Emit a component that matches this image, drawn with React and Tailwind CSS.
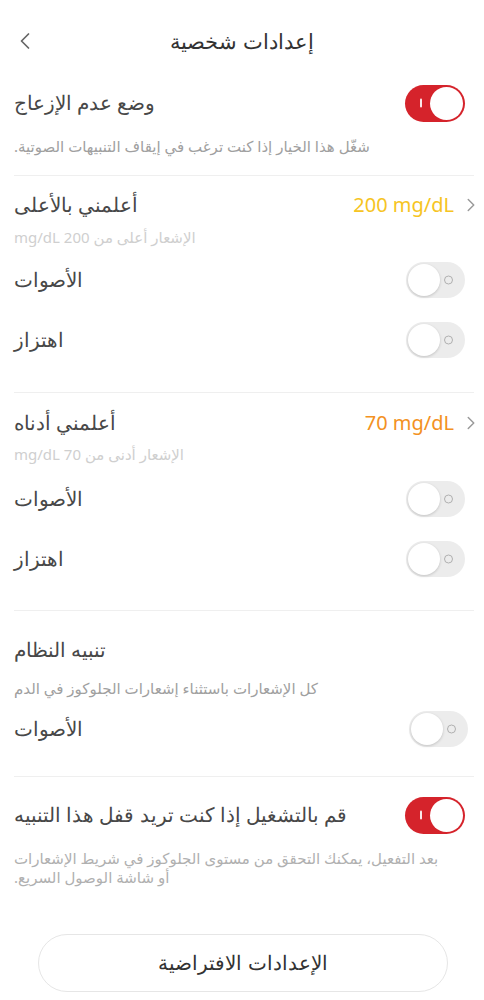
import { ChevronLeft, ChevronRight } from 'lucide-react'

const font = { fontFamily: '"Noto Sans", "DejaVu Sans", sans-serif' }

// ── Toggle ────────────────────────────────────────────────────────────────
function Toggle({ on, className = 'mr-[9px]' }) {
  if (on) {
    return (
      <div className={`relative w-[60px] h-[37px] rounded-full bg-[#d5232b] flex items-center justify-end pr-[2px] ${className}`}>
        <span className="absolute left-[15px] top-1/2 -translate-y-1/2 w-[2px] h-[9px] bg-white/90 rounded" />
        <span className="w-[33px] h-[33px] rounded-full bg-white" />
      </div>
    )
  }
  return (
    <div className={`relative w-[59px] h-[36px] rounded-full bg-[#ececec] flex items-center pl-[2px] ${className}`}>
      <span className="w-[32px] h-[32px] rounded-full bg-white shadow-[0_1px_3px_rgba(0,0,0,0.18)]" />
      <span className="absolute right-[12px] top-1/2 -translate-y-1/2 w-[9px] h-[9px] rounded-full border-[1.5px] border-[#b0b0b0]" />
    </div>
  )
}

function Label({ children, className = '' }) {
  return <p dir="rtl" className={`text-left text-[20px] font-light text-[#484848] ${className}`}>{children}</p>
}

function Hint({ children, className = '' }) {
  return <p dir="rtl" className={`text-left text-[15px] leading-[20px] ${className}`}>{children}</p>
}

function ToggleRow({ label, on = false, h = 'h-[60px]', toggleClass }) {
  return (
    <div className={`flex items-center justify-between ${h}`}>
      <Label>{label}</Label>
      <Toggle on={on} className={toggleClass} />
    </div>
  )
}

function ThresholdRow({ label, value, color }) {
  return (
    <div className="flex items-center justify-between h-[30px]">
      <Label>{label}</Label>
      <div className="flex items-center gap-[6px]">
        <span className={`text-[20px] ${color}`}>{value}</span>
        <ChevronRight className="w-[22px] h-[22px] text-[#9a9a9a] -mr-[8px]" strokeWidth={1.6} />
      </div>
    </div>
  )
}

export default function App() {
  return (
    <div className="w-[484px] min-h-[1000px] bg-white" style={font}>
      {/* Header */}
      <div className="relative h-[84px] flex items-center justify-center">
        <ChevronLeft className="absolute left-[11px] top-[27px] w-[28px] h-[28px] text-[#666]" strokeWidth={1.5} />
        <h1 dir="rtl" className="text-[21px] font-light text-[#333]">إعدادات شخصية</h1>
      </div>

      <div className="pl-[14px] pr-[10px]">
        {/* Do not disturb */}
        <div className="pb-[19px] border-b border-[#efefef]">
          <ToggleRow label="وضع عدم الإزعاج" on h="h-[38px]" />
          <Hint className="mt-[14px] text-[#a0a0a0]">شغّل هذا الخيار إذا كنت ترغب في إيقاف التنبيهات الصوتية.</Hint>
        </div>

        {/* High */}
        <div className="pt-[14px] pb-[22px] border-b border-[#efefef]">
          <ThresholdRow label="أعلمني بالأعلى" value="200 mg/dL" color="text-[#f6c423]" />
          <Hint className="mt-[7px] text-[#cfcfcf]">الإشعار أعلى من 200 mg/dL</Hint>
          <div className="mt-[3px]">
            <ToggleRow label="الأصوات" />
            <ToggleRow label="اهتزاز" />
          </div>
        </div>

        {/* Low */}
        <div className="pt-[15px] pb-[21px] border-b border-[#efefef]">
          <ThresholdRow label="أعلمني أدناه" value="70 mg/dL" color="text-[#f39122]" />
          <Hint className="mt-[6px] text-[#cfcfcf]">الإشعار أدنى من 70 mg/dL</Hint>
          <div className="mt-[5px]">
            <ToggleRow label="الأصوات" />
            <ToggleRow label="اهتزاز" />
          </div>
        </div>

        {/* System */}
        <div className="pt-[24px] pb-[22px] border-b border-[#efefef]">
          <div className="h-[30px] flex items-center">
            <Label>تنبيه النظام</Label>
          </div>
          <Hint className="mt-[13px] text-[#a0a0a0]">كل الإشعارات باستثناء إشعارات الجلوكوز في الدم</Hint>
          <div className="mt-[6px]">
            <ToggleRow label="الأصوات" h="h-[50px]" toggleClass="mr-[6px]" />
          </div>
        </div>

        {/* Lock */}
        <div className="pt-[19px]">
          <ToggleRow label="قم بالتشغيل إذا كنت تريد قفل هذا التنبيه" on h="h-[38px]" />
          <p dir="rtl" className="mt-[15px] w-[440px] text-left text-[15px] leading-[19px] text-[#b0b0b0]">
            بعد التفعيل، يمكنك التحقق من مستوى الجلوكوز في شريط الإشعارات<br />أو شاشة الوصول السريع.
          </p>
        </div>

        <div className="pt-[47px] pl-[24px] pr-[26px]">
          <button className="w-full h-[58px] rounded-full border border-[#e6e6e6] bg-white flex items-center justify-center">
            <span dir="rtl" className="text-[20px] font-light text-[#333]">الإعدادات الافتراضية</span>
          </button>
        </div>
      </div>
    </div>
  )
}
